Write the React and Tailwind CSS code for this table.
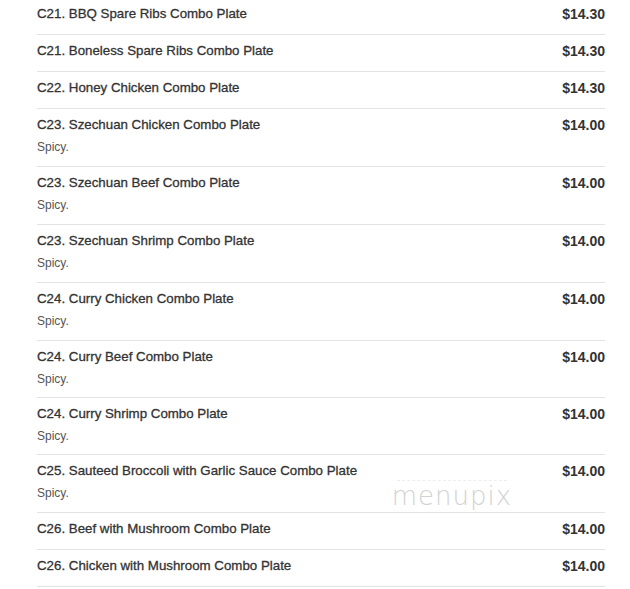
import React from 'react';

const items = [
  { name: 'C21. BBQ Spare Ribs Combo Plate', price: '$14.30' },
  { name: 'C21. Boneless Spare Ribs Combo Plate', price: '$14.30' },
  { name: 'C22. Honey Chicken Combo Plate', price: '$14.30' },
  { name: 'C23. Szechuan Chicken Combo Plate', price: '$14.00', note: 'Spicy.' },
  { name: 'C23. Szechuan Beef Combo Plate', price: '$14.00', note: 'Spicy.' },
  { name: 'C23. Szechuan Shrimp Combo Plate', price: '$14.00', note: 'Spicy.' },
  { name: 'C24. Curry Chicken Combo Plate', price: '$14.00', note: 'Spicy.' },
  { name: 'C24. Curry Beef Combo Plate', price: '$14.00', note: 'Spicy.', tight: true },
  { name: 'C24. Curry Shrimp Combo Plate', price: '$14.00', note: 'Spicy.', tight: true },
  { name: 'C25. Sauteed Broccoli with Garlic Sauce Combo Plate', price: '$14.00', note: 'Spicy.' },
  { name: 'C26. Beef with Mushroom Combo Plate', price: '$14.00' },
  { name: 'C26. Chicken with Mushroom Combo Plate', price: '$14.00' },
];

const MenuRow = ({ item }) => (
  <div className={`border-b border-[#e3e3e3] pt-[7px] ${item.tight ? 'pb-[9px]' : 'pb-[10px]'}`}>
    <div className="flex items-start justify-between">
      <span className="text-[13.3px] leading-[18px] text-[#333] [-webkit-text-stroke:0.3px_#333]">
        {item.name}
      </span>
      <span className="text-[14px] leading-[18px] font-bold text-[#333]">{item.price}</span>
    </div>
    {item.note ? (
      <div className="mt-[4px] text-[12px] leading-[18px] text-[#555]">{item.note}</div>
    ) : (
      <div className="h-[1px]" />
    )}
  </div>
);

export default function App() {
  return (
    <div className="relative w-[630px] h-[589px] overflow-hidden bg-white font-['Liberation_Sans',Arial,sans-serif]">
      <div className="ml-[37px] w-[568px] -mt-[2px]">
        {items.map((item, i) => (
          <MenuRow key={i} item={item} />
        ))}
      </div>
      <div className="absolute left-[397px] top-[480px] w-[110px] flex flex-col items-center pointer-events-none">
        <div className="w-[110px] border-t border-dashed border-[#eee]" />
        <span className="text-[26px] leading-[30px] tracking-[1px] text-[#d2d2d2] font-['DejaVu_Sans',sans-serif] [font-weight:200]">
          menupix
        </span>
      </div>
    </div>
  );
}
